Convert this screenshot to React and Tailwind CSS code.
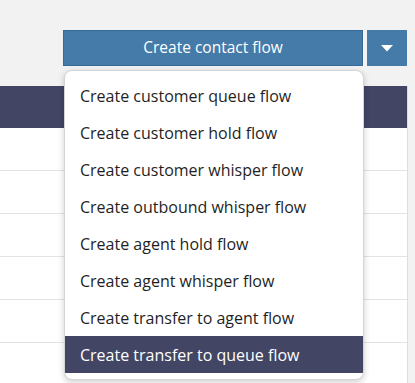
import React from "react";

const items = [
  "Create customer queue flow",
  "Create customer hold flow",
  "Create customer whisper flow",
  "Create outbound whisper flow",
  "Create agent hold flow",
  "Create agent whisper flow",
  "Create transfer to agent flow",
  "Create transfer to queue flow",
];

export default function App() {
  return (
    <div
      className="relative w-[415px] h-[383px] overflow-hidden bg-[#f2f2f2]"
      style={{ fontFamily: '"Open Sans", "Liberation Sans", sans-serif' }}
    >
      <div className="h-[86px] pt-[30px] pr-[8px] flex justify-end gap-[4px]">
        <button className="w-[300px] h-[36px] bg-[#447ba8] border border-[#346a96] text-white text-[15.5px] flex items-center justify-center">
          Create contact flow
        </button>
        <button className="w-[40px] h-[36px] bg-[#447ba8] flex items-center justify-center">
          <svg width="12" height="7" viewBox="0 0 12 7">
            <polygon points="0,0 12,0 6,6.5" fill="#fff" />
          </svg>
        </button>
      </div>
      <div className="w-[408px] border-r border-[#dddddd]">
        <div className="h-[42px] bg-[#424563]" />
        <div className="bg-white">
          {[0, 1, 2, 3, 4, 5].map((i) => (
            <div key={i} className="h-[43px] border-b border-[#e3e3e3]" />
          ))}
        </div>
      </div>
      <div className="absolute left-[64px] top-[70px] w-[300px] bg-white border border-[#d5d5d5] rounded-[8px] shadow-[0_2px_6px_rgba(0,0,0,0.2)] pt-[6px] pb-[6px] overflow-hidden">
        {items.map((t, i) => (
          <div
            key={t}
            className={
              "h-[37px] flex items-center pl-[15px] text-[16px] " +
              (i === items.length - 1 ? "bg-[#424563] text-white" : "text-[#1f1f1f]")
            }
          >
            {t}
          </div>
        ))}
      </div>
    </div>
  );
}
